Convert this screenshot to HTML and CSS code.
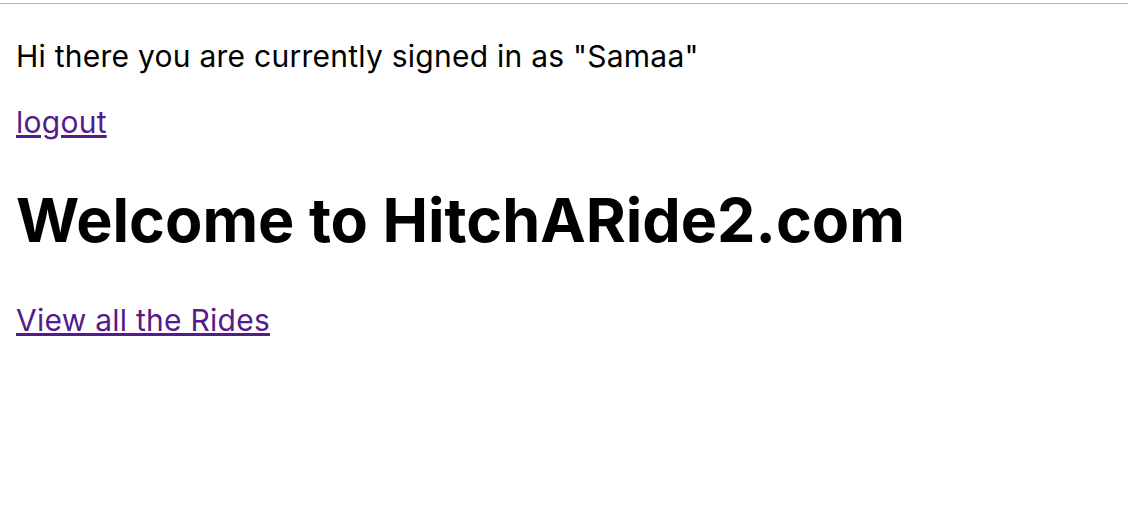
FILE: index.html
```html
<!DOCTYPE html>
<html>
<head>
<meta charset="utf-8">
<link rel="stylesheet" href="styles.css">
</head>
<body>
<div class="frame-line"></div>
<main class="page">
  <p class="greeting">Hi there you are currently signed in as "Samaa"</p>
  <p class="link-row"><a href="#" class="link">logout</a></p>
  <h1 class="title">Welcome to HitchARide2.com</h1>
  <p class="link-row"><a href="#" class="link">View all the Rides</a></p>
</main>
</body>
</html>
```
FILE: styles.css
```css
html, body {
  margin: 0;
  padding: 0;
  background: #fff;
}
body {
  font-family: Inter, "Noto Sans", sans-serif;
  color: #000;
}
.frame-line {
  height: 3px;
  width: 1128px;
  border-bottom: 1px solid #b5b5b5;
}
.page {
  padding: 0 16px;
}
.greeting {
  font-size: 30px;
  letter-spacing: 0.25px;
  margin: 34px 0 0;
  line-height: 36px;
}
.link-row {
  font-size: 30px;
  letter-spacing: 0.25px;
  line-height: 36px;
  margin: 30px 0 0;
}
.link {
  color: #551a8b;
  text-decoration: underline;
}
.title {
  font-size: 61px;
  font-weight: 700;
  margin: 44px 0 0;
  line-height: 72px;
}
.title + .link-row {
  margin-top: 46px;
}
```
